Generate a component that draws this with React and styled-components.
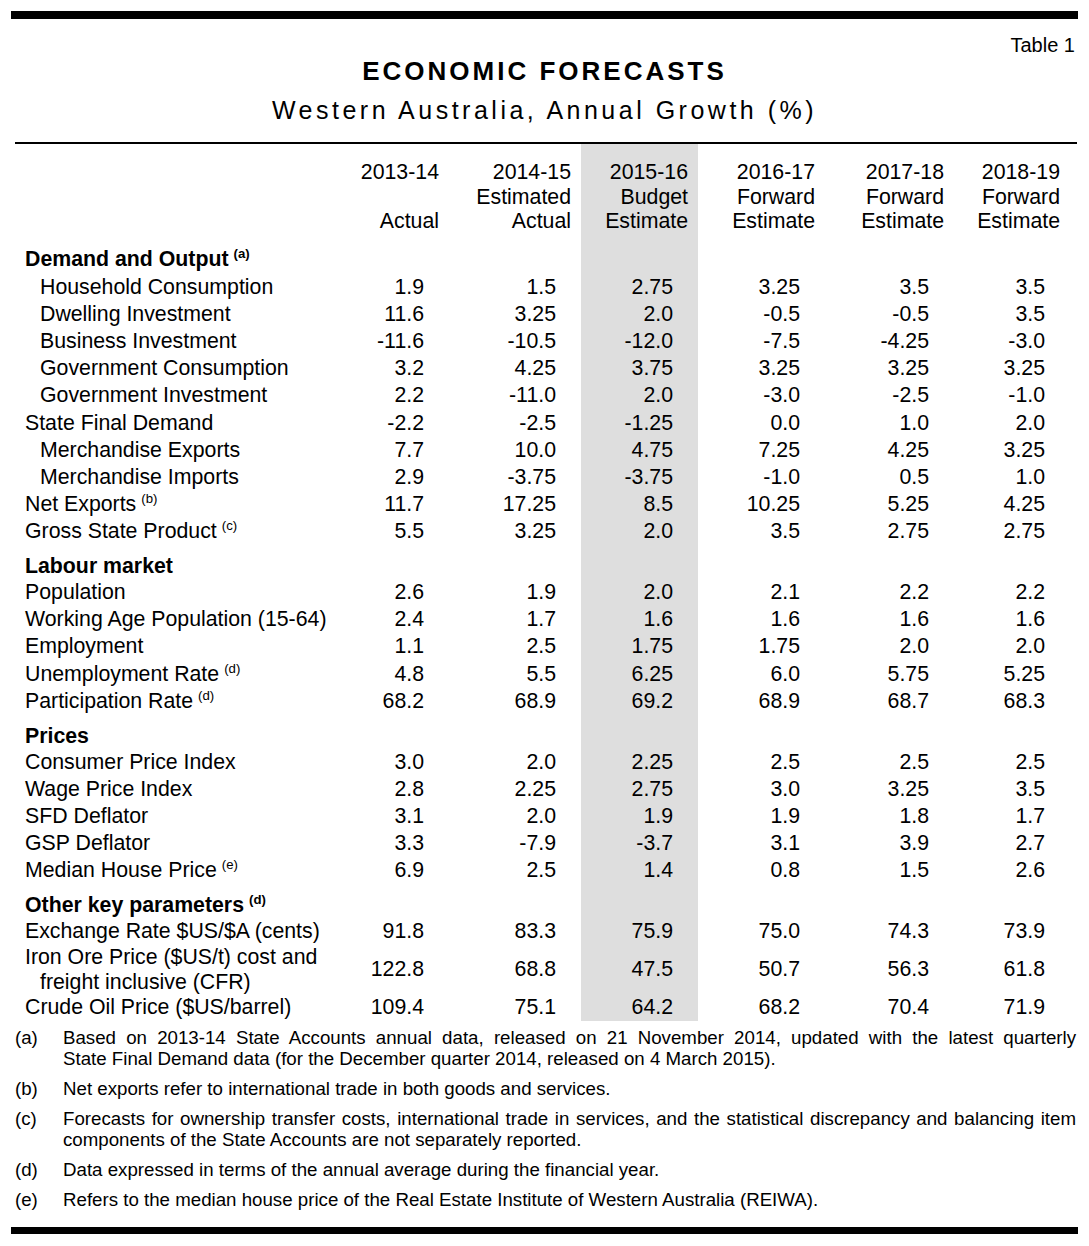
import React from "react";
import styled, { createGlobalStyle } from "styled-components";

// Table 1 - economic forecasts, laid out like the printed budget paper page

const GlobalStyle = createGlobalStyle`
  body {
    margin: 0;
    background: #fff;
    color: #000;
    font-family: "Liberation Sans", Arial, sans-serif;
  }
`;

const columns = [
  ["2013-14", "", "Actual"],
  ["2014-15", "Estimated", "Actual"],
  ["2015-16", "Budget", "Estimate"],
  ["2016-17", "Forward", "Estimate"],
  ["2017-18", "Forward", "Estimate"],
  ["2018-19", "Forward", "Estimate"],
];

const widths = [324, 110, 132, 117, 127, 129, 116];
const SHADED = 2; // index of the budget year column

const sections = [
  {
    title: "Demand and Output",
    note: "a",
    first: true,
    rows: [
      { label: "Household Consumption", sub: true, v: ["1.9", "1.5", "2.75", "3.25", "3.5", "3.5"] },
      { label: "Dwelling Investment", sub: true, v: ["11.6", "3.25", "2.0", "-0.5", "-0.5", "3.5"] },
      { label: "Business Investment", sub: true, v: ["-11.6", "-10.5", "-12.0", "-7.5", "-4.25", "-3.0"] },
      { label: "Government Consumption", sub: true, v: ["3.2", "4.25", "3.75", "3.25", "3.25", "3.25"] },
      { label: "Government Investment", sub: true, v: ["2.2", "-11.0", "2.0", "-3.0", "-2.5", "-1.0"] },
      { label: "State Final Demand", v: ["-2.2", "-2.5", "-1.25", "0.0", "1.0", "2.0"] },
      { label: "Merchandise Exports", sub: true, v: ["7.7", "10.0", "4.75", "7.25", "4.25", "3.25"] },
      { label: "Merchandise Imports", sub: true, v: ["2.9", "-3.75", "-3.75", "-1.0", "0.5", "1.0"] },
      { label: "Net Exports", note: "b", v: ["11.7", "17.25", "8.5", "10.25", "5.25", "4.25"] },
      { label: "Gross State Product", note: "c", v: ["5.5", "3.25", "2.0", "3.5", "2.75", "2.75"] },
    ],
  },
  {
    title: "Labour market",
    rows: [
      { label: "Population", v: ["2.6", "1.9", "2.0", "2.1", "2.2", "2.2"] },
      { label: "Working Age Population (15-64)", v: ["2.4", "1.7", "1.6", "1.6", "1.6", "1.6"] },
      { label: "Employment", v: ["1.1", "2.5", "1.75", "1.75", "2.0", "2.0"] },
      { label: "Unemployment Rate", note: "d", v: ["4.8", "5.5", "6.25", "6.0", "5.75", "5.25"] },
      { label: "Participation Rate", note: "d", v: ["68.2", "68.9", "69.2", "68.9", "68.7", "68.3"] },
    ],
  },
  {
    title: "Prices",
    rows: [
      { label: "Consumer Price Index", v: ["3.0", "2.0", "2.25", "2.5", "2.5", "2.5"] },
      { label: "Wage Price Index", v: ["2.8", "2.25", "2.75", "3.0", "3.25", "3.5"] },
      { label: "SFD Deflator", v: ["3.1", "2.0", "1.9", "1.9", "1.8", "1.7"] },
      { label: "GSP Deflator", v: ["3.3", "-7.9", "-3.7", "3.1", "3.9", "2.7"] },
      { label: "Median House Price", note: "e", v: ["6.9", "2.5", "1.4", "0.8", "1.5", "2.6"] },
    ],
  },
  {
    title: "Other key parameters",
    note: "d",
    rows: [
      { label: "Exchange Rate $US/$A (cents)", v: ["91.8", "83.3", "75.9", "75.0", "74.3", "73.9"] },
      {
        label: "Iron Ore Price ($US/t) cost and",
        cont: "freight inclusive (CFR)",
        v: ["122.8", "68.8", "47.5", "50.7", "56.3", "61.8"],
      },
      { label: "Crude Oil Price ($US/barrel)", v: ["109.4", "75.1", "64.2", "68.2", "70.4", "71.9"] },
    ],
  },
];

// a footnote given as two parts keeps the printed line break after the first part
const notes = [
  ["(a)", [
    "Based on 2013-14 State Accounts annual data, released on 21 November 2014, updated with the latest quarterly",
    "State Final Demand data (for the December quarter 2014, released on 4 March 2015).",
  ]],
  ["(b)", ["Net exports refer to international trade in both goods and services."]],
  ["(c)", ["Forecasts for ownership transfer costs, international trade in services, and the statistical discrepancy and balancing item components of the State Accounts are not separately reported."]],
  ["(d)", ["Data expressed in terms of the annual average during the financial year."]],
  ["(e)", ["Refers to the median house price of the Real Estate Institute of Western Australia (REIWA)."]],
];

const Note = ({ id }) => <Sup>({id})</Sup>;

const App = () => {
  return (
    <Page>
      <GlobalStyle />
      <ThickBar />
      <TableNo>Table 1</TableNo>
      <Title>ECONOMIC FORECASTS</Title>
      <Subtitle>Western Australia, Annual Growth (%)</Subtitle>
      <Rule />

      <Table>
        <colgroup>
          {widths.map((w, i) => (
            <col key={i} style={{ width: w }} />
          ))}
        </colgroup>
        <thead>
          <tr>
            <th />
            {columns.map((lines, i) => (
              <HeadCell key={i} $shade={i === SHADED}>
                {lines.map((l, j) => (
                  <HeadLine key={j}>{l}</HeadLine>
                ))}
              </HeadCell>
            ))}
          </tr>
        </thead>
        <tbody>
          {sections.map((s) => (
            <React.Fragment key={s.title}>
              <tr>
                <SectionCell $first={s.first}>
                  {s.title}
                  {s.note && <Note id={s.note} />}
                </SectionCell>
                {columns.map((_, i) => (
                  <Filler key={i} $shade={i === SHADED} />
                ))}
              </tr>
              {s.rows.map((r) => (
                <tr key={r.label}>
                  <Label $sub={r.sub} $wrap={!!r.cont}>
                    {r.label}
                    {r.note && <Note id={r.note} />}
                    {r.cont && <Continued>{r.cont}</Continued>}
                  </Label>
                  {r.v.map((val, i) => (
                    <Num key={i} $shade={i === SHADED}>
                      {val}
                    </Num>
                  ))}
                </tr>
              ))}
            </React.Fragment>
          ))}
        </tbody>
      </Table>

      <Notes>
        {notes.map(([k, parts]) => (
          <NoteRow key={k}>
            <NoteKey>{k}</NoteKey>
            <NoteText>
              {parts.map((p, i) => (
                <NotePart key={i} $full={i < parts.length - 1}>
                  {p}
                </NotePart>
              ))}
            </NoteText>
          </NoteRow>
        ))}
      </Notes>

      <ThickBar $bottom />
    </Page>
  );
};

export default App;

const Page = styled.div`
  width: 1067px;
  padding: 11px 11px 12px;
`;

const ThickBar = styled.div`
  height: ${(p) => (p.$bottom ? "7px" : "8px")};
  background: #000;
  margin-top: ${(p) => (p.$bottom ? "17px" : "0")};
`;

const TableNo = styled.div`
  margin-top: 15px;
  padding-right: 3px;
  text-align: right;
  font-size: 20px;
  line-height: 22px;
`;

const Title = styled.h1`
  margin: 0;
  text-align: center;
  font-size: 26px;
  line-height: 30px;
  font-weight: bold;
  letter-spacing: 3px;
`;

const Subtitle = styled.h2`
  margin: 10px 0 0;
  text-align: center;
  font-size: 25px;
  line-height: 29px;
  font-weight: normal;
  letter-spacing: 3.5px;
`;

const Rule = styled.div`
  height: 2px;
  background: #000;
  margin: 17px 1px 0 4px;
`;

const Table = styled.table`
  margin-left: 4px;
  width: 1055px;
  table-layout: fixed;
  border-collapse: collapse;
  border-spacing: 0;
  font-size: 21.3px;
`;

const shade = (p) => (p.$shade ? "#dedede" : "transparent");

const HeadCell = styled.th`
  background: ${shade};
  padding: 16px 10px 0 0;
  text-align: right;
  vertical-align: top;
  font-weight: normal;
`;

const HeadLine = styled.div`
  height: 24.5px;
  line-height: 24.5px;
  white-space: nowrap;
`;

const SectionCell = styled.td`
  padding: ${(p) => (p.$first ? "13px 0 2px 10px" : "8.5px 0 0 10px")};
  line-height: 25px;
  font-weight: bold;
  white-space: nowrap;
`;

const Filler = styled.td`
  background: ${shade};
  padding: 0;
`;

const Label = styled.td`
  padding: 0 0 0 ${(p) => (p.$sub ? "25px" : "10px")};
  line-height: ${(p) => (p.$wrap ? "24.5px" : "27.2px")};
  white-space: nowrap;
`;

const Continued = styled.span`
  display: block;
  padding-left: 15px;
`;

const Num = styled.td`
  background: ${shade};
  padding: 0 25px 0 0;
  text-align: right;
  vertical-align: middle;
  line-height: 27.2px;
  white-space: nowrap;
`;

const Sup = styled.sup`
  font-size: 0.62em;
  line-height: 0;
  vertical-align: 0.6em;
  margin-left: 5px;
`;

const Notes = styled.div`
  margin: 6px 2px 0 4px;
  display: flex;
  flex-direction: column;
  gap: 9px;
  font-size: 18.7px;
  line-height: 21px;
`;

const NoteRow = styled.div`
  display: grid;
  grid-template-columns: 48px 1fr;
`;

const NoteKey = styled.span``;

const NoteText = styled.div`
  text-align: justify;
`;

const NotePart = styled.div`
  text-align-last: ${(p) => (p.$full ? "justify" : "auto")};
`;
